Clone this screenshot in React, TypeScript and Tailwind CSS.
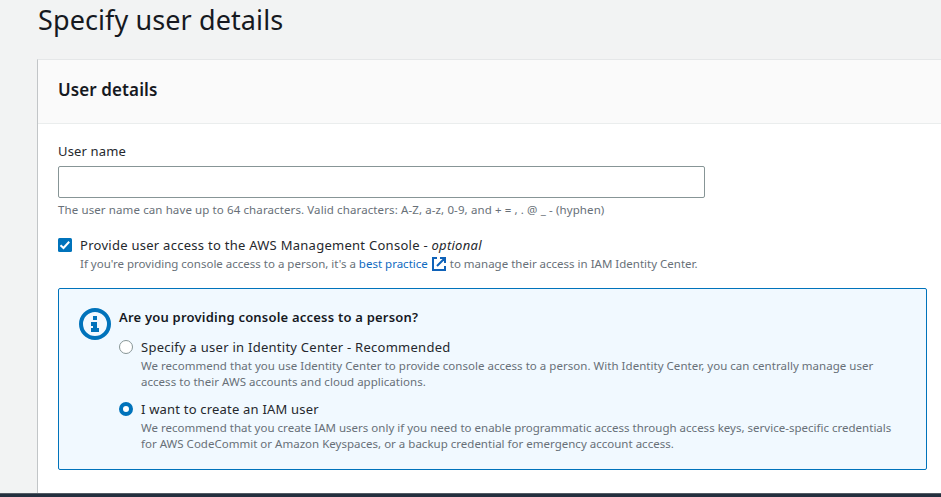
import React from "react";

function ExternalIcon() {
  return (
    <svg className="ml-1 mr-px inline-block h-[14px] w-[14px] align-[-3px]" viewBox="0 0 14 14" fill="none" stroke="#0f62b8" strokeWidth="2">
      <path d="M5 1H1v12h12V9M8 1h5v5M13 1L5 9" />
    </svg>
  );
}

function InfoIcon() {
  return (
    <svg className="h-8 w-8 shrink-0" viewBox="0 0 32 32" fill="none">
      <circle cx="16" cy="16" r="14" stroke="#0073bb" strokeWidth="4" />
      <path d="M14 8h4v4h-4zM12 14h6v6h2v4h-8v-4h2v-2h-2z" fill="#0073bb" />
    </svg>
  );
}

function Radio({ checked }: { checked?: boolean }) {
  return (
    <svg className="mt-[3px] h-[14px] w-[14px] shrink-0" viewBox="0 0 14 14" role="radio" aria-checked={!!checked}>
      {checked ? (
        <circle cx="7" cy="7" r="5" fill="#fff" stroke="#0073bb" strokeWidth="4" />
      ) : (
        <circle cx="7" cy="7" r="6.5" fill="#fff" stroke="#879596" />
      )}
    </svg>
  );
}

export default function App() {
  return (
    <div className="flex h-[497px] w-[941px] flex-col overflow-hidden whitespace-nowrap bg-[#f2f3f3] font-['Noto_Sans',sans-serif] text-[13px] leading-5 text-[#25282d]">
      <h1 className="ml-[38px] mt-[2px] h-[57px] text-[27px] leading-9 tracking-[0.1px] text-[#16191f]">Specify user details</h1>
      <main className="ml-[37px] flex min-h-0 flex-1 flex-col border-l border-t border-l-[#c2c5c7] border-t-[#e5e7e8] bg-white">
        <header className="flex h-16 shrink-0 items-center border-b border-[#eaeded] bg-[#fafafa] pb-[3px] pl-5">
          <h2 className="text-[17px] font-semibold tracking-[0.1px] text-[#16191f]">User details</h2>
        </header>
        <div className="pl-5 pt-[17px]">
          <label className="block tracking-[0.15px]" htmlFor="user">User name</label>
          <input id="user" className="mt-[5px] block h-8 w-[647px] rounded-[2px] border border-[#879596] bg-white px-2 outline-none" />
          <p className="mt-1 text-[11.5px] leading-4 tracking-[0.11px] text-[#687078]">The user name can have up to 64 characters. Valid characters: A-Z, a-z, 0-9, and + = , . @ _ - (hyphen)</p>
          <div className="mt-[17px] flex gap-2">
            <svg className="mt-[3px] h-[14px] w-[14px] shrink-0" viewBox="0 0 14 14">
              <rect width="14" height="14" rx="1.5" fill="#0073bb" />
              <path d="M2.5 7.2L5.5 10l5.7-6.2" fill="none" stroke="#fff" strokeWidth="2" />
            </svg>
            <div>
              <p className="tracking-[0.27px]">Provide user access to the AWS Management Console - <i>optional</i></p>
              <p className="mt-px h-4 text-[11.5px] leading-4 text-[#687078]">If you're providing console access to a person, it's a <a className="text-[#0f6abf]">best practice</a><ExternalIcon /> to manage their access in IAM Identity Center.</p>
            </div>
          </div>
        </div>
        <section className="ml-5 mt-4 flex h-[182px] w-[869px] shrink-0 rounded-[2px] border border-[#0073bb] bg-[#f1f9ff] pl-5 pt-[19px]">
          <InfoIcon />
          <div className="ml-2 -mt-px">
            <h3 className="font-semibold tracking-[0.21px] text-[#16191f]">Are you providing console access to a person?</h3>
            <div className="mt-[10px] flex gap-2">
              <Radio />
              <div>
                <p className="tracking-[0.26px]">Specify a user in Identity Center - Recommended</p>
                <p className="mt-px text-[11.5px] leading-4 tracking-[0.03px] text-[#687078]">We recommend that you use Identity Center to provide console access to a person. With Identity Center, you can centrally manage user<br />access to their AWS accounts and cloud applications.</p>
              </div>
            </div>
            <div className="mt-[9px] flex gap-2">
              <Radio checked />
              <div>
                <p className="tracking-[0.2px]">I want to create an IAM user</p>
                <p className="mt-px text-[11.5px] leading-4 tracking-[0.01px] text-[#687078]">We recommend that you create IAM users only if you need to enable programmatic access through access keys, service-specific credentials<br />for AWS CodeCommit or Amazon Keyspaces, or a backup credential for emergency account access.</p>
              </div>
            </div>
          </div>
        </section>
      </main>
      <footer className="h-1 shrink-0 border-t border-[#545b64] bg-[#232f3e]" />
    </div>
  );
}
